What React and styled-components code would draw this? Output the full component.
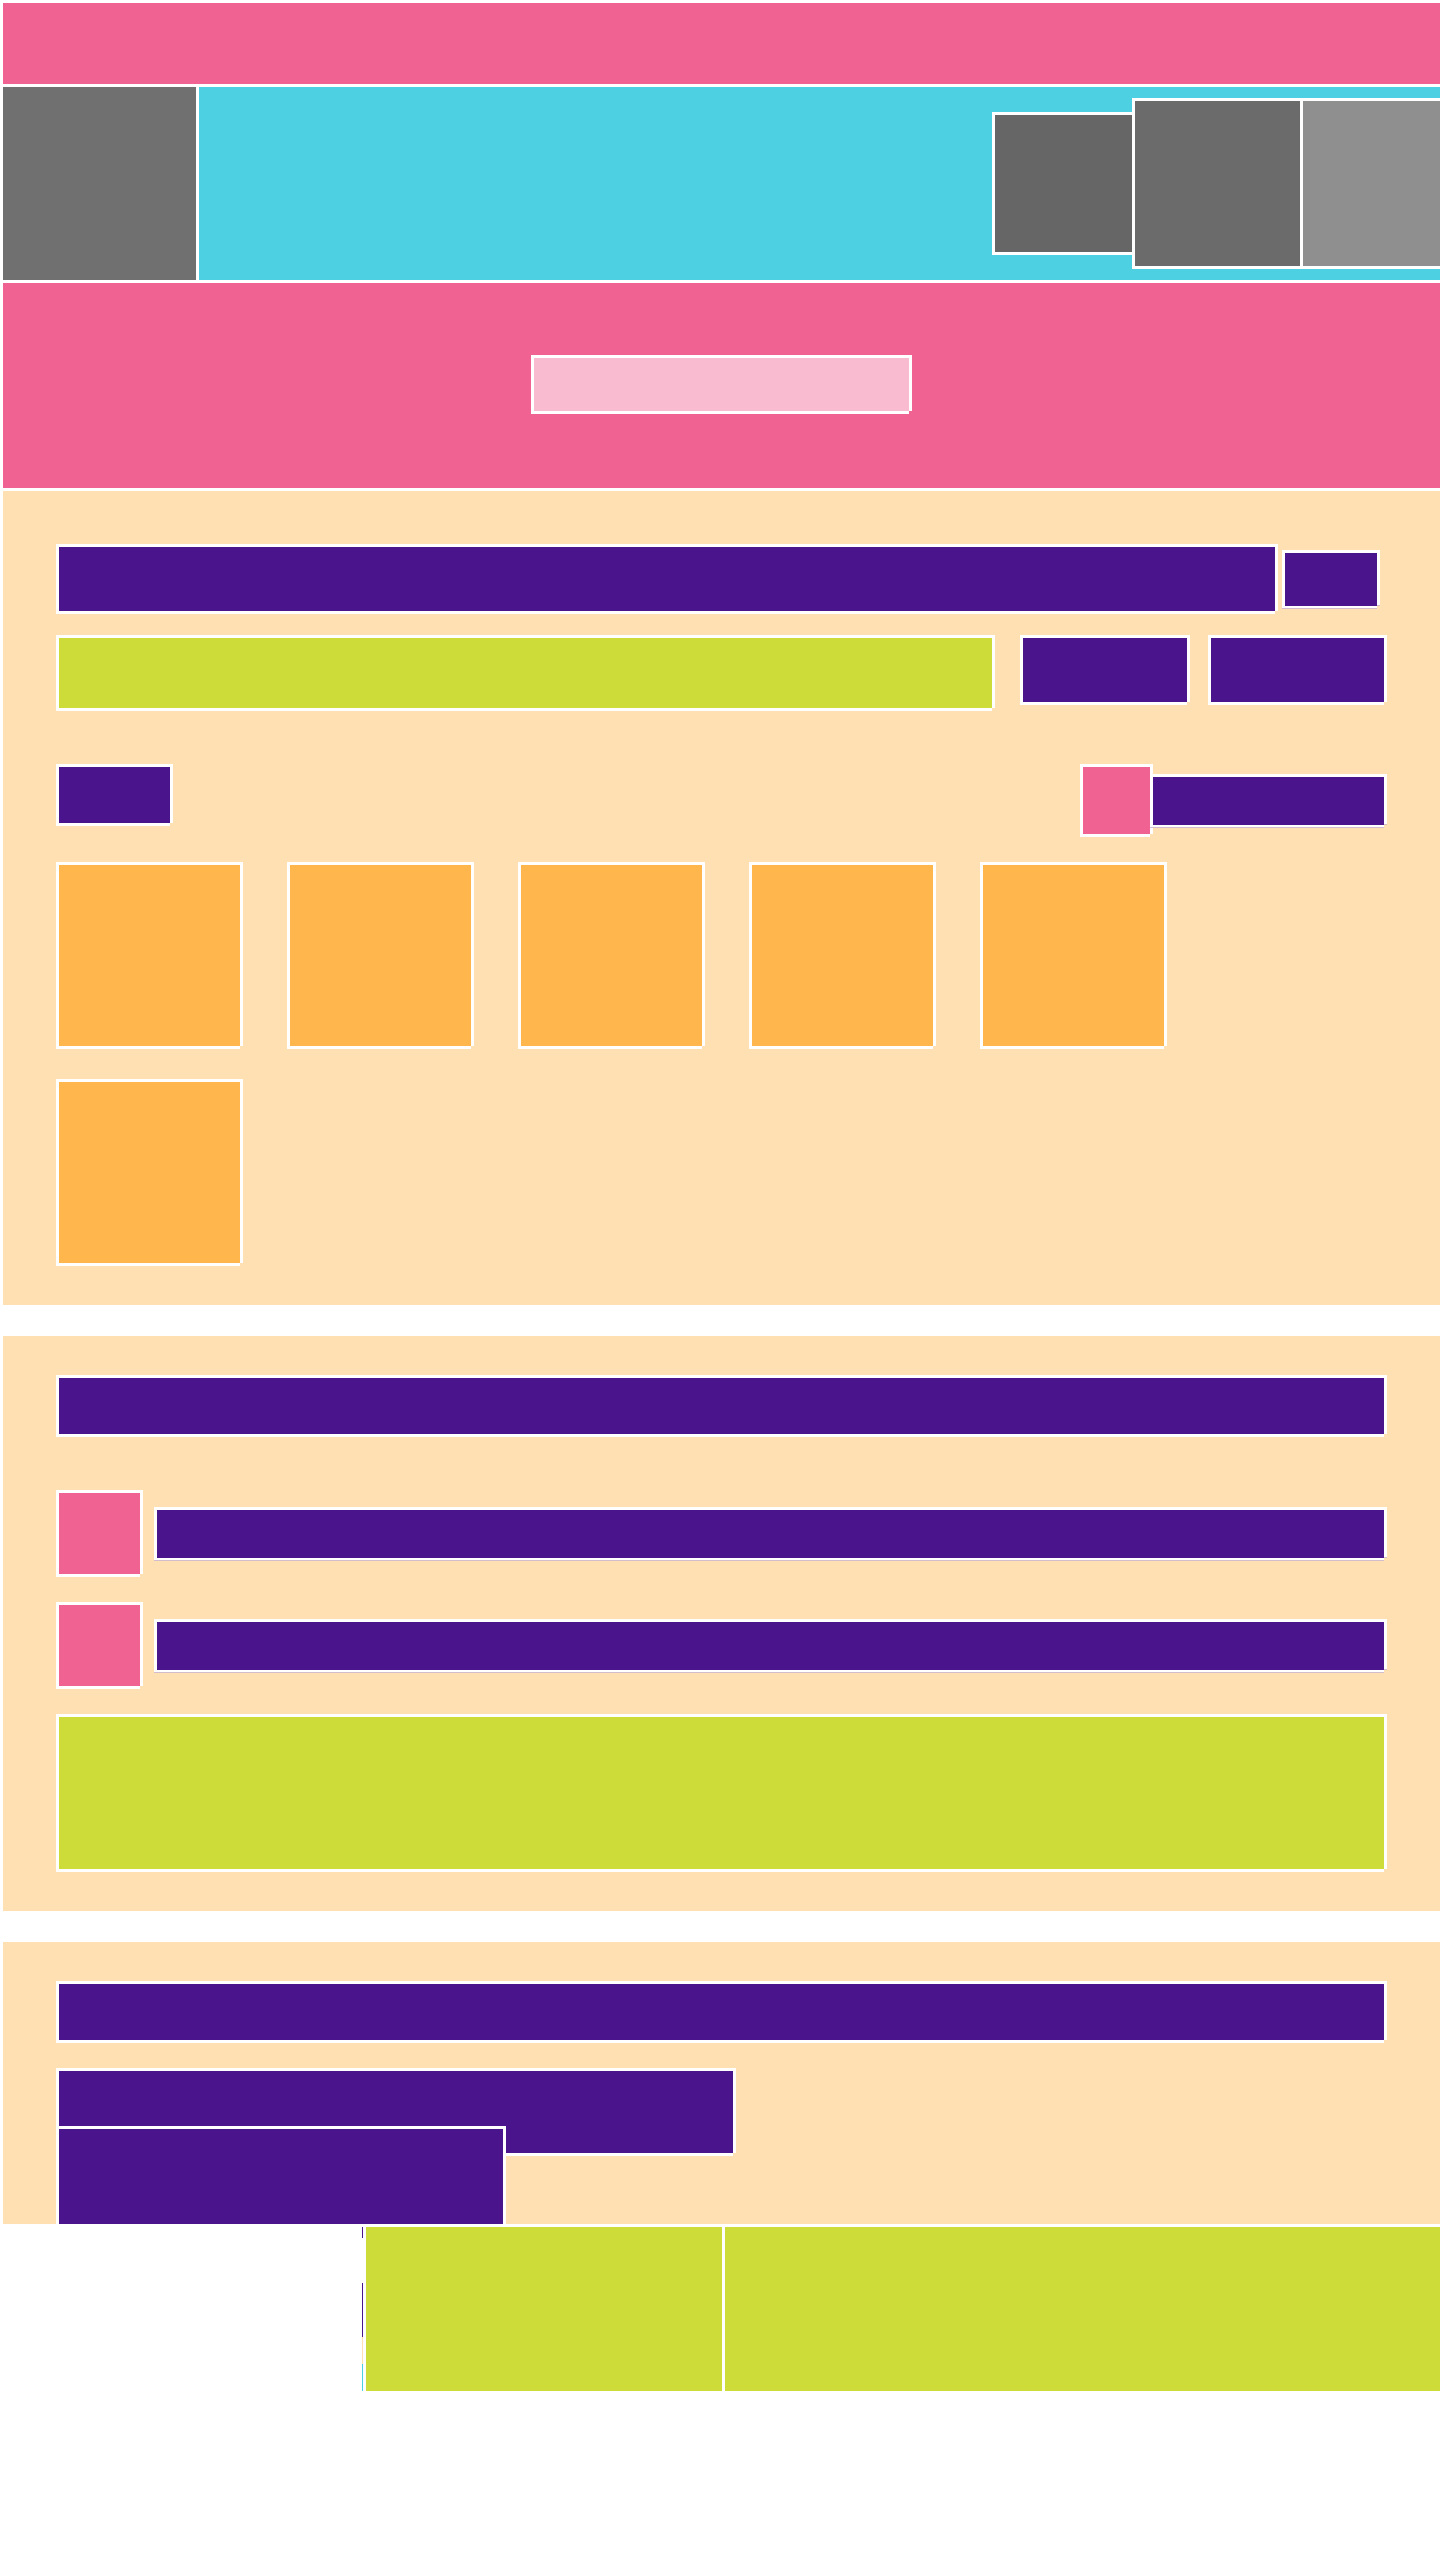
import React from 'react';
import styled, { createGlobalStyle, css } from 'styled-components';

const C = {
  pink: '#f06292',
  cyan: '#4dd0e1',
  beige: '#ffe0b2',
  purple: '#4a148c',
  lime: '#cddc39',
  orange: '#ffb74d',
  blush: '#f8bbd0',
};

const Global = createGlobalStyle`
  html, body { margin: 0; padding: 0; background: #fff; overflow-x: hidden; }
  body { font-family: "Liberation Sans", Arial, sans-serif; }
`;

const framed = css`
  box-sizing: border-box;
  flex-shrink: 0;
  border: 3px solid #fff;
  clip-path: polygon(0 0, 100% 0, 100% calc(100% - 3px), calc(100% - 3px) calc(100% - 3px), calc(100% - 3px) 100%, 0 100%);
`;

const Page = styled.div`
  width: 1440px;
  overflow: hidden;
  display: flex;
  flex-direction: column;
  align-items: flex-start;
`;

const TopBar = styled.header`
  ${framed};
  width: 1443px;
  height: 87px;
  background: ${C.pink};
`;

const HeroRow = styled.div`
  display: flex;
  margin-top: -3px;
  width: 1443px;
  height: 199px;
`;

const Poster = styled.div`
  ${framed};
  width: 199px;
  height: 199px;
  background: #707070;
`;

const Showcase = styled.div`
  ${framed};
  margin-left: -3px;
  width: 1247px;
  height: 199px;
  background: ${C.cyan};
  display: flex;
  align-items: center;
  padding-left: 793px;
`;

const Slide = styled.div`
  ${framed};
  width: ${(p) => p.$size}px;
  height: ${(p) => p.$size}px;
  background: ${(p) => p.$tone};
  & + & { margin-left: -3px; }
`;

const SearchBand = styled.div`
  ${framed};
  margin-top: -3px;
  width: 1443px;
  height: 211px;
  background: ${C.pink};
  display: flex;
  align-items: center;
  justify-content: center;
  padding-bottom: 2px;
`;

const SearchField = styled.div`
  ${framed};
  width: 381px;
  height: 59px;
  background: ${C.blush};
`;

const Section = styled.section`
  ${framed};
  width: 1443px;
  margin-top: ${(p) => p.$mt}px;
  padding: ${(p) => p.$pt}px 53px 39px 53px;
  background: ${C.beige};
  display: flex;
  flex-direction: column;
  align-items: flex-start;
  ${(p) => p.$height && css`
    height: ${p.$height}px;
    overflow: hidden;
  `}
`;

const Bar = styled.div`
  ${framed};
  width: ${(p) => p.$w}px;
  height: ${(p) => p.$h}px;
  background: ${(p) => p.$tone || C.purple};
  margin-top: ${(p) => p.$mt || 0}px;
  margin-left: ${(p) => p.$ml || 0}px;
`;

const Row = styled.div`
  display: flex;
  align-items: ${(p) => p.$align || 'center'};
  justify-content: ${(p) => p.$justify || 'flex-start'};
  gap: ${(p) => p.$gap || 0}px;
  width: 1331px;
  margin-top: ${(p) => p.$mt || 0}px;
`;

const Group = styled.div`
  display: flex;
  align-items: center;
`;

const Avatar = styled.div`
  ${framed};
  width: ${(p) => p.$size}px;
  height: ${(p) => p.$size}px;
  background: ${C.pink};
`;

const TileGrid = styled.div`
  display: grid;
  grid-template-columns: repeat(5, 187px);
  column-gap: 44px;
  row-gap: 30px;
  margin-top: 25px;
`;

const Tile = styled.div`
  ${framed};
  width: 187px;
  height: 187px;
  background: ${C.orange};
`;

const FooterRow = styled.div`
  display: flex;
  margin-top: -3px;
  width: 1443px;
  height: 170px;
  padding-left: 362px;
  box-sizing: border-box;
`;

const Rule = styled.div`
  width: 1px;
  height: 167px;
  background: linear-gradient(
    to bottom,
    #4a148c 0,
    #4a148c 14px,
    #fff 14px,
    #fff 59px,
    #4a148c 59px,
    #4a148c 113px,
    #ffe0b2 113px,
    #ffe0b2 140px,
    #4dd0e1 140px,
    #4dd0e1 167px
  );
`;

const Promo = styled.div`
  ${framed};
  width: ${(p) => p.$w}px;
  height: 170px;
  background: ${C.lime};
  & + & { margin-left: -3px; }
`;

export default function App() {
  return (
    <>
      <Global />
      <Page>
        <TopBar />
        <HeroRow>
          <Poster />
          <Showcase>
            <Slide $size={143} $tone="#666666" />
            <Slide $size={171} $tone="#6b6b6b" />
            <Slide $size={171} $tone="#8f8f8f" />
          </Showcase>
        </HeroRow>
        <SearchBand>
          <SearchField />
        </SearchBand>

        <Section $mt={-3} $pt={53}>
          <Row $gap={4}>
            <Bar $w={1222} $h={70} />
            <Bar $w={98} $h={59} />
          </Row>
          <Row $mt={21} $align="flex-start">
            <Bar $w={939} $h={76} $tone={C.lime} />
            <Bar $w={170} $h={70} $ml={25} />
            <Bar $w={179} $h={70} $ml={18} />
          </Row>
          <Row $mt={53} $align="flex-start" $justify="space-between">
            <Bar $w={117} $h={62} />
            <Group>
              <Avatar $size={73} />
              <Bar $w={237} $h={54} $ml={-3} />
            </Group>
          </Row>
          <TileGrid>
            {Array.from({ length: 6 }).map((_, i) => (
              <Tile key={i} />
            ))}
          </TileGrid>
        </Section>

        <Section $mt={25} $pt={39}>
          <Bar $w={1331} $h={62} />
          <Row $mt={53} $gap={11}>
            <Avatar $size={87} />
            <Bar $w={1233} $h={54} />
          </Row>
          <Row $mt={25} $gap={11}>
            <Avatar $size={87} />
            <Bar $w={1233} $h={54} />
          </Row>
          <Bar $w={1331} $h={158} $mt={25} $tone={C.lime} />
        </Section>

        <Section $mt={25} $pt={39} $height={288}>
          <Bar $w={1331} $h={62} />
          <Bar $w={680} $h={88} $mt={25} />
          <Bar $w={450} $h={160} $mt={-30} />
        </Section>

        <FooterRow>
          <Rule />
          <Promo $w={362} />
          <Promo $w={721} />
        </FooterRow>
      </Page>
    </>
  );
}
